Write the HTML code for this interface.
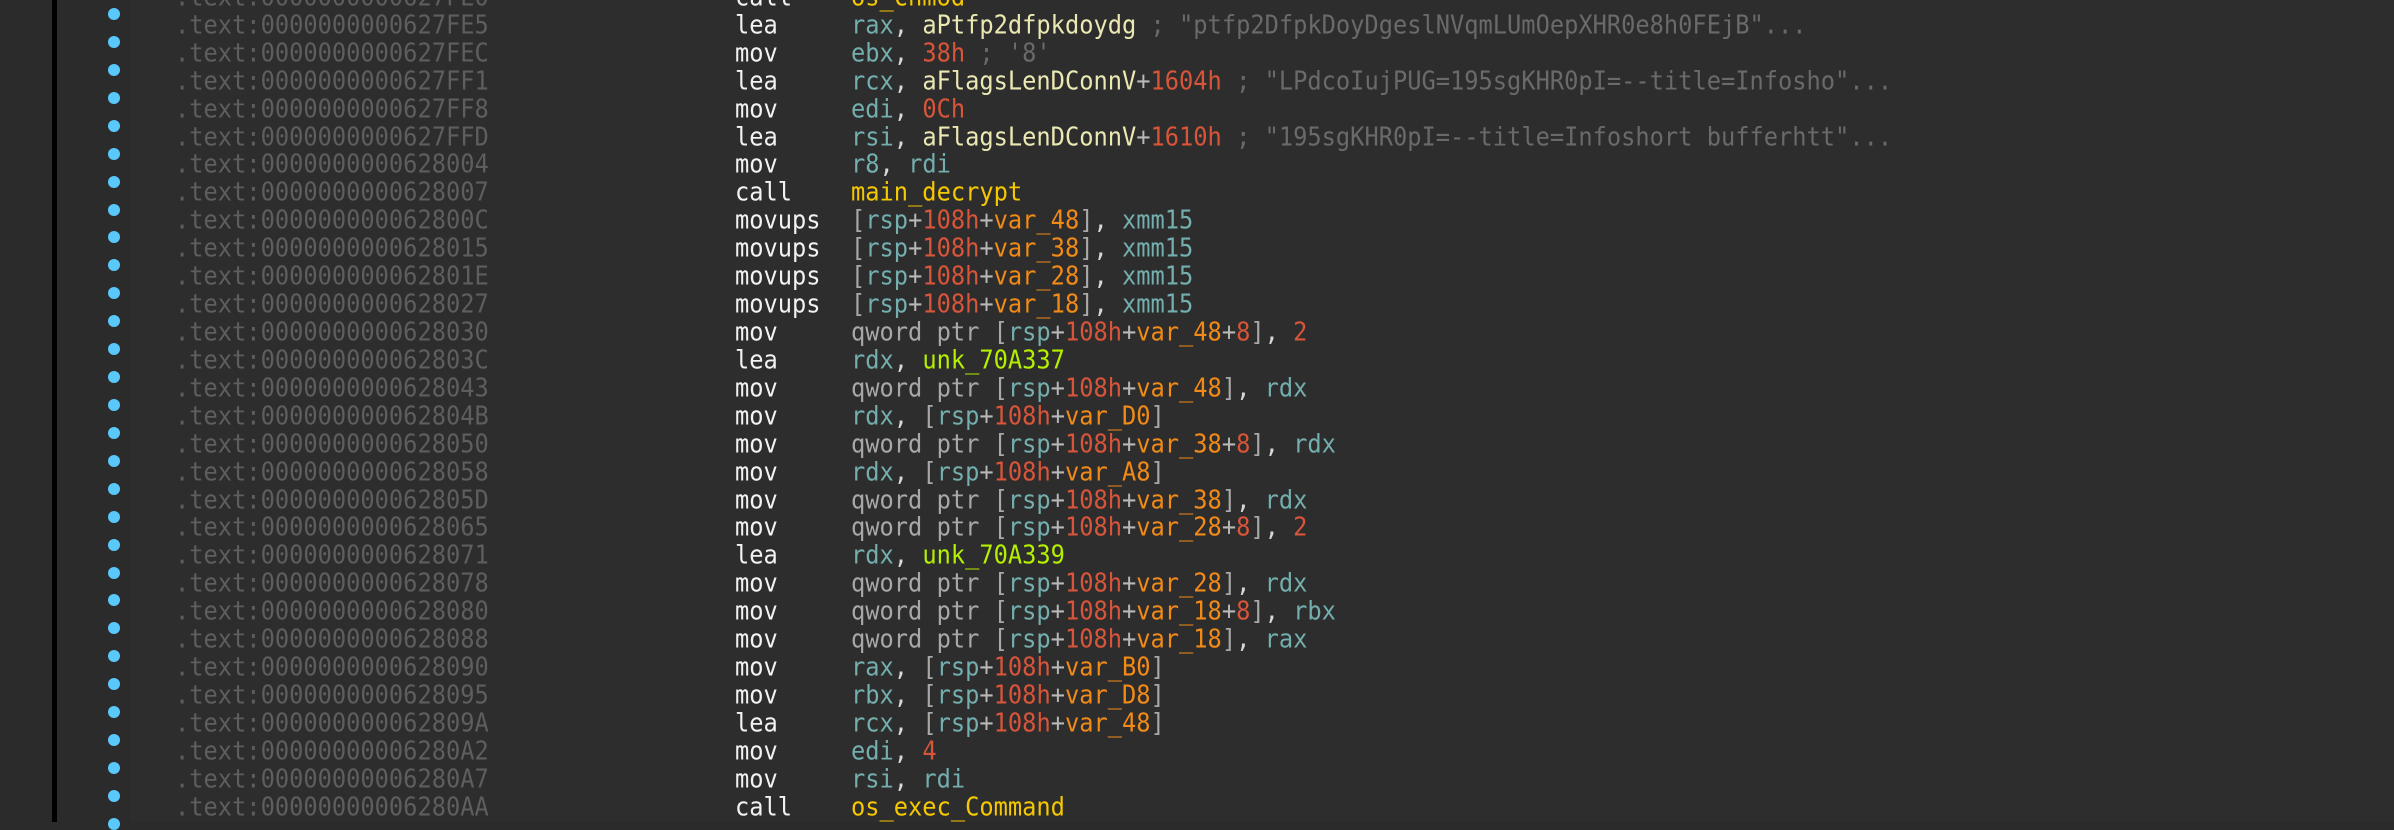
<!DOCTYPE html>
<html><head><meta charset="utf-8"><style>
html,body{margin:0;padding:0;width:2394px;height:822px;overflow:hidden;background:#2b2b2b}
#gut{position:absolute;left:57px;top:0;width:73px;height:822px;background:#2b2b2b}
#main{position:absolute;left:130px;top:0;width:2264px;height:822px;background:#2d2d2d}
#bar{position:absolute;left:52px;top:0;width:5px;height:822px;background:#000}
.d{position:absolute;left:108px;width:12px;height:12px;border-radius:50%;background:#5ac8fa}
.r{position:absolute;left:0;width:2394px;height:28px;line-height:28px;white-space:pre;font-family:"DejaVu Sans Mono","Liberation Mono",monospace;font-size:23.7px;color:#ececec;transform:scaleY(1.08)}
.a{position:absolute;left:175px;color:#5e5e5e}
.m{position:absolute;left:735px;color:#f2f2f2}
.o{position:absolute;left:851px;color:#d8d8d8}
.g{color:#74aeae}.n{color:#ebe8b2}.h{color:#d9553a}.v{color:#f28a17}.f{color:#f5c800}.u{color:#b4f000}.p{color:#a8a8a8}.c{color:#6a6a6a}.w{color:#b8b8b8}
</style></head><body>
<div id="gut"></div><div id="main"></div><div id="bar"></div>
<div class="d" style="top:8px"></div><div class="d" style="top:36px"></div><div class="d" style="top:64px"></div><div class="d" style="top:92px"></div><div class="d" style="top:120px"></div><div class="d" style="top:148px"></div><div class="d" style="top:176px"></div><div class="d" style="top:204px"></div><div class="d" style="top:231px"></div><div class="d" style="top:259px"></div><div class="d" style="top:287px"></div><div class="d" style="top:315px"></div><div class="d" style="top:343px"></div><div class="d" style="top:371px"></div><div class="d" style="top:399px"></div><div class="d" style="top:427px"></div><div class="d" style="top:455px"></div><div class="d" style="top:483px"></div><div class="d" style="top:511px"></div><div class="d" style="top:539px"></div><div class="d" style="top:567px"></div><div class="d" style="top:594px"></div><div class="d" style="top:622px"></div><div class="d" style="top:650px"></div><div class="d" style="top:678px"></div><div class="d" style="top:706px"></div><div class="d" style="top:734px"></div><div class="d" style="top:762px"></div><div class="d" style="top:790px"></div><div class="d" style="top:818px"></div>

<div class="r" style="top:-17px"><span class="a">.text:0000000000627FE0</span><span class="m">call</span><span class="o"><span class="f">os_chmod</span></span></div>
<div class="r" style="top:11px"><span class="a">.text:0000000000627FE5</span><span class="m">lea</span><span class="o"><span class="g">rax</span>, <span class="n">aPtfp2dfpkdoydg</span> <span class="c">; "ptfp2DfpkDoyDgeslNVqmLUmOepXHR0e8h0FEjB"...</span></span></div>
<div class="r" style="top:39px"><span class="a">.text:0000000000627FEC</span><span class="m">mov</span><span class="o"><span class="g">ebx</span>, <span class="h">38h</span> <span class="c">; '8'</span></span></div>
<div class="r" style="top:67px"><span class="a">.text:0000000000627FF1</span><span class="m">lea</span><span class="o"><span class="g">rcx</span>, <span class="n">aFlagsLenDConnV</span><span class="w">+</span><span class="h">1604h</span> <span class="c">; "LPdcoIujPUG=195sgKHR0pI=--title=Infosho"...</span></span></div>
<div class="r" style="top:95px"><span class="a">.text:0000000000627FF8</span><span class="m">mov</span><span class="o"><span class="g">edi</span>, <span class="h">0Ch</span></span></div>
<div class="r" style="top:123px"><span class="a">.text:0000000000627FFD</span><span class="m">lea</span><span class="o"><span class="g">rsi</span>, <span class="n">aFlagsLenDConnV</span><span class="w">+</span><span class="h">1610h</span> <span class="c">; "195sgKHR0pI=--title=Infoshort bufferhtt"...</span></span></div>
<div class="r" style="top:150px"><span class="a">.text:0000000000628004</span><span class="m">mov</span><span class="o"><span class="g">r8</span>, <span class="g">rdi</span></span></div>
<div class="r" style="top:178px"><span class="a">.text:0000000000628007</span><span class="m">call</span><span class="o"><span class="f">main_decrypt</span></span></div>
<div class="r" style="top:206px"><span class="a">.text:000000000062800C</span><span class="m">movups</span><span class="o"><span class="p">[</span><span class="g">rsp</span><span class="w">+</span><span class="h">108h</span><span class="w">+</span><span class="v">var_48</span><span class="p">]</span>, <span class="g">xmm15</span></span></div>
<div class="r" style="top:234px"><span class="a">.text:0000000000628015</span><span class="m">movups</span><span class="o"><span class="p">[</span><span class="g">rsp</span><span class="w">+</span><span class="h">108h</span><span class="w">+</span><span class="v">var_38</span><span class="p">]</span>, <span class="g">xmm15</span></span></div>
<div class="r" style="top:262px"><span class="a">.text:000000000062801E</span><span class="m">movups</span><span class="o"><span class="p">[</span><span class="g">rsp</span><span class="w">+</span><span class="h">108h</span><span class="w">+</span><span class="v">var_28</span><span class="p">]</span>, <span class="g">xmm15</span></span></div>
<div class="r" style="top:290px"><span class="a">.text:0000000000628027</span><span class="m">movups</span><span class="o"><span class="p">[</span><span class="g">rsp</span><span class="w">+</span><span class="h">108h</span><span class="w">+</span><span class="v">var_18</span><span class="p">]</span>, <span class="g">xmm15</span></span></div>
<div class="r" style="top:318px"><span class="a">.text:0000000000628030</span><span class="m">mov</span><span class="o"><span class="p">qword ptr [</span><span class="g">rsp</span><span class="w">+</span><span class="h">108h</span><span class="w">+</span><span class="v">var_48</span><span class="w">+</span><span class="h">8</span><span class="p">]</span>, <span class="h">2</span></span></div>
<div class="r" style="top:346px"><span class="a">.text:000000000062803C</span><span class="m">lea</span><span class="o"><span class="g">rdx</span>, <span class="u">unk_70A337</span></span></div>
<div class="r" style="top:374px"><span class="a">.text:0000000000628043</span><span class="m">mov</span><span class="o"><span class="p">qword ptr [</span><span class="g">rsp</span><span class="w">+</span><span class="h">108h</span><span class="w">+</span><span class="v">var_48</span><span class="p">]</span>, <span class="g">rdx</span></span></div>
<div class="r" style="top:402px"><span class="a">.text:000000000062804B</span><span class="m">mov</span><span class="o"><span class="g">rdx</span>, <span class="p">[</span><span class="g">rsp</span><span class="w">+</span><span class="h">108h</span><span class="w">+</span><span class="v">var_D0</span><span class="p">]</span></span></div>
<div class="r" style="top:430px"><span class="a">.text:0000000000628050</span><span class="m">mov</span><span class="o"><span class="p">qword ptr [</span><span class="g">rsp</span><span class="w">+</span><span class="h">108h</span><span class="w">+</span><span class="v">var_38</span><span class="w">+</span><span class="h">8</span><span class="p">]</span>, <span class="g">rdx</span></span></div>
<div class="r" style="top:458px"><span class="a">.text:0000000000628058</span><span class="m">mov</span><span class="o"><span class="g">rdx</span>, <span class="p">[</span><span class="g">rsp</span><span class="w">+</span><span class="h">108h</span><span class="w">+</span><span class="v">var_A8</span><span class="p">]</span></span></div>
<div class="r" style="top:486px"><span class="a">.text:000000000062805D</span><span class="m">mov</span><span class="o"><span class="p">qword ptr [</span><span class="g">rsp</span><span class="w">+</span><span class="h">108h</span><span class="w">+</span><span class="v">var_38</span><span class="p">]</span>, <span class="g">rdx</span></span></div>
<div class="r" style="top:513px"><span class="a">.text:0000000000628065</span><span class="m">mov</span><span class="o"><span class="p">qword ptr [</span><span class="g">rsp</span><span class="w">+</span><span class="h">108h</span><span class="w">+</span><span class="v">var_28</span><span class="w">+</span><span class="h">8</span><span class="p">]</span>, <span class="h">2</span></span></div>
<div class="r" style="top:541px"><span class="a">.text:0000000000628071</span><span class="m">lea</span><span class="o"><span class="g">rdx</span>, <span class="u">unk_70A339</span></span></div>
<div class="r" style="top:569px"><span class="a">.text:0000000000628078</span><span class="m">mov</span><span class="o"><span class="p">qword ptr [</span><span class="g">rsp</span><span class="w">+</span><span class="h">108h</span><span class="w">+</span><span class="v">var_28</span><span class="p">]</span>, <span class="g">rdx</span></span></div>
<div class="r" style="top:597px"><span class="a">.text:0000000000628080</span><span class="m">mov</span><span class="o"><span class="p">qword ptr [</span><span class="g">rsp</span><span class="w">+</span><span class="h">108h</span><span class="w">+</span><span class="v">var_18</span><span class="w">+</span><span class="h">8</span><span class="p">]</span>, <span class="g">rbx</span></span></div>
<div class="r" style="top:625px"><span class="a">.text:0000000000628088</span><span class="m">mov</span><span class="o"><span class="p">qword ptr [</span><span class="g">rsp</span><span class="w">+</span><span class="h">108h</span><span class="w">+</span><span class="v">var_18</span><span class="p">]</span>, <span class="g">rax</span></span></div>
<div class="r" style="top:653px"><span class="a">.text:0000000000628090</span><span class="m">mov</span><span class="o"><span class="g">rax</span>, <span class="p">[</span><span class="g">rsp</span><span class="w">+</span><span class="h">108h</span><span class="w">+</span><span class="v">var_B0</span><span class="p">]</span></span></div>
<div class="r" style="top:681px"><span class="a">.text:0000000000628095</span><span class="m">mov</span><span class="o"><span class="g">rbx</span>, <span class="p">[</span><span class="g">rsp</span><span class="w">+</span><span class="h">108h</span><span class="w">+</span><span class="v">var_D8</span><span class="p">]</span></span></div>
<div class="r" style="top:709px"><span class="a">.text:000000000062809A</span><span class="m">lea</span><span class="o"><span class="g">rcx</span>, <span class="p">[</span><span class="g">rsp</span><span class="w">+</span><span class="h">108h</span><span class="w">+</span><span class="v">var_48</span><span class="p">]</span></span></div>
<div class="r" style="top:737px"><span class="a">.text:00000000006280A2</span><span class="m">mov</span><span class="o"><span class="g">edi</span>, <span class="h">4</span></span></div>
<div class="r" style="top:765px"><span class="a">.text:00000000006280A7</span><span class="m">mov</span><span class="o"><span class="g">rsi</span>, <span class="g">rdi</span></span></div>
<div class="r" style="top:793px"><span class="a">.text:00000000006280AA</span><span class="m">call</span><span class="o"><span class="f">os_exec_Command</span></span></div>
</body></html>
